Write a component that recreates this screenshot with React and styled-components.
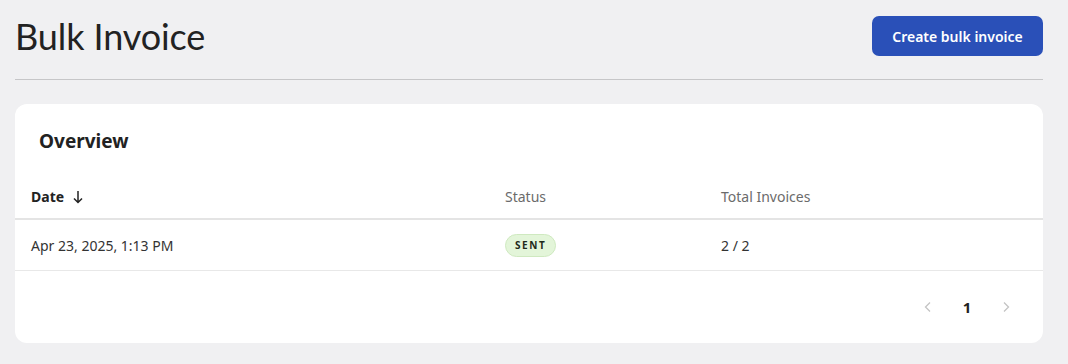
import React from "react";
import styled, { createGlobalStyle } from "styled-components";

const Global = createGlobalStyle`
  html, body { margin: 0; padding: 0; background: #f0f0f2; }
  body { font-family: "Noto Sans", "Open Sans", sans-serif; color: #222; }
`;

const Page = styled.div`
  padding: 16px 25px 0 15px;
  display: flex;
  flex-direction: column;
`;

const Header = styled.header`
  display: flex;
  justify-content: space-between;
  align-items: flex-start;
  padding-bottom: 23px;
  border-bottom: 1px solid #c6c6c8;
`;

const Title = styled.h1`
  margin: 0;
  font-family: "Lato", sans-serif;
  font-weight: 400;
  font-size: 36px;
  line-height: 40px;
  color: #222;
  letter-spacing: -0.1px;
`;

const PrimaryButton = styled.button`
  height: 40px;
  width: 171px;
  border: none;
  border-radius: 7px;
  background: #2a50b8;
  color: #fff;
  font-family: "Noto Sans", sans-serif;
  font-weight: 600;
  font-size: 14px;
  cursor: pointer;
`;

const Card = styled.section`
  margin-top: 24px;
  background: #fff;
  border-radius: 12px;
  overflow: hidden;
`;

const CardTitle = styled.h2`
  margin: 0;
  padding: 23px 24px 0;
  font-family: "Noto Sans", sans-serif;
  font-weight: 700;
  font-size: 19px;
  line-height: 28px;
  color: #222;
`;

const Table = styled.table`
  width: 100%;
  margin-top: 20px;
  border-collapse: collapse;
  table-layout: fixed;
  font-family: "Noto Sans", sans-serif;
  font-size: 14px;
`;

const Th = styled.th`
  text-align: left;
  padding: 0 16px;
  height: 43px;
  font-weight: ${(p) => (p.$active ? 700 : 400)};
  color: ${(p) => (p.$active ? "#222" : "#6b6b6b")};
  border-bottom: 2px solid #e4e4e4;
  width: ${(p) => p.$w || "auto"};
  vertical-align: middle;
`;

const Td = styled.td`
  padding: 0 16px;
  height: 50px;
  color: #333;
  border-bottom: 1px solid #e8e8e8;
`;

const SortLabel = styled.span`
  display: inline-flex;
  align-items: center;
  gap: 9px;
`;

const Badge = styled.span`
  display: inline-block;
  padding: 2px 9px;
  border-radius: 12px;
  background: #e3f5d9;
  border: 1px solid #cfe9c0;
  color: #1f2a1a;
  font-size: 10px;
  font-weight: 700;
  letter-spacing: 1.6px;
  line-height: 17px;
`;

const Pager = styled.nav`
  display: flex;
  justify-content: flex-end;
  align-items: center;
  height: 72px;
  padding-right: 27px;
  gap: 19px;
`;

const PageButton = styled.button`
  border: none;
  background: none;
  padding: 0;
  width: 20px;
  display: flex;
  justify-content: center;
  align-items: center;
  font-family: "Noto Sans", sans-serif;
  font-weight: 700;
  font-size: 15px;
  color: ${(p) => (p.disabled ? "#c4c4c4" : "#222")};
`;

const Chevron = ({ dir }) => (
  <svg width="10" height="12" viewBox="0 0 10 12" fill="none">
    <path
      d={dir === "left" ? "M7 1.5 L2.5 6 L7 10.5" : "M3 1.5 L7.5 6 L3 10.5"}
      stroke="currentColor"
      strokeWidth="1.3"
    />
  </svg>
);

const ArrowDown = () => (
  <svg width="10" height="14" viewBox="0 0 10 14" fill="none">
    <path d="M5 1 V12.5 M1 8.5 L5 12.5 L9 8.5" stroke="#222" strokeWidth="1.5" />
  </svg>
);

export default function App() {
  return (
    <>
      <Global />
      <Page>
        <Header>
          <Title>Bulk Invoice</Title>
          <PrimaryButton>Create bulk invoice</PrimaryButton>
        </Header>
        <Card>
          <CardTitle>Overview</CardTitle>
          <Table>
            <thead>
              <tr>
                <Th $active $w="442px">
                  <SortLabel>
                    Date <ArrowDown />
                  </SortLabel>
                </Th>
                <Th $w="184px">Status</Th>
                <Th>Total Invoices</Th>
              </tr>
            </thead>
            <tbody>
              <tr>
                <Td>Apr 23, 2025, 1:13 PM</Td>
                <Td>
                  <Badge>SENT</Badge>
                </Td>
                <Td>2 / 2</Td>
              </tr>
            </tbody>
          </Table>
          <Pager>
            <PageButton disabled aria-label="Previous">
              <Chevron dir="left" />
            </PageButton>
            <PageButton>1</PageButton>
            <PageButton disabled aria-label="Next">
              <Chevron dir="right" />
            </PageButton>
          </Pager>
        </Card>
      </Page>
    </>
  );
}
